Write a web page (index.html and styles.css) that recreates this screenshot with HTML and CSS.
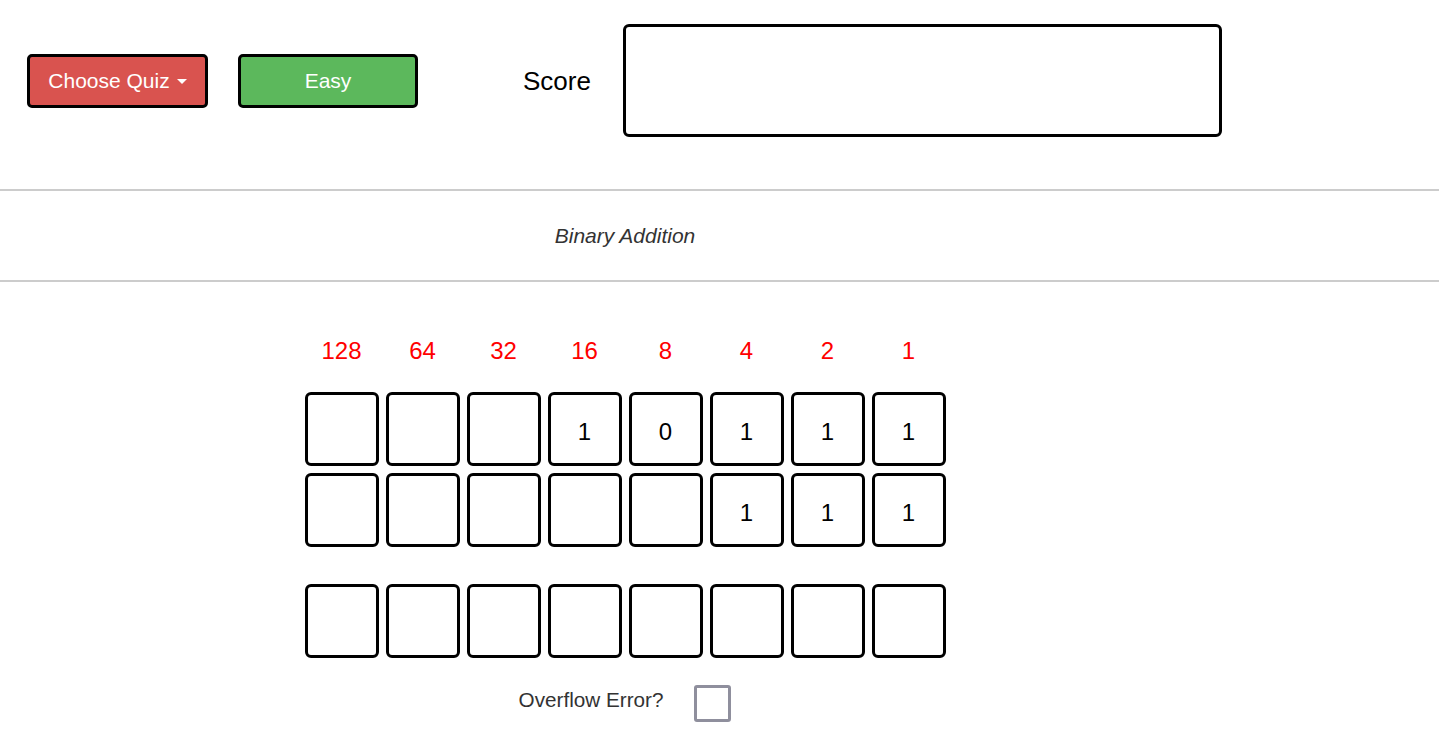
FILE: index.html
```html
<!DOCTYPE html>
<html lang="en">
<head>
<meta charset="utf-8">
<title>Binary Addition Quiz</title>
<link rel="stylesheet" href="styles.css">
</head>
<body>
  <header class="topbar">
    <button class="btn btn-red" type="button">Choose Quiz <span class="caret"></span></button>
    <button class="btn btn-green" type="button">Easy</button>
    <span class="score-label">Score</span>
    <div class="score-box"></div>
  </header>
  <hr class="rule">
  <section class="title-bar">
    <div class="main">
      <p class="quiz-title">Binary Addition</p>
    </div>
  </section>
  <hr class="rule">
  <section class="main">
    <div class="board">
      <div class="grid labels">
        <span>128</span><span>64</span><span>32</span><span>16</span><span>8</span><span>4</span><span>2</span><span>1</span>
      </div>
      <div class="grid cells">
        <div class="cell"></div><div class="cell"></div><div class="cell"></div><div class="cell">1</div><div class="cell">0</div><div class="cell">1</div><div class="cell">1</div><div class="cell">1</div>
        <div class="cell"></div><div class="cell"></div><div class="cell"></div><div class="cell"></div><div class="cell"></div><div class="cell">1</div><div class="cell">1</div><div class="cell">1</div>
      </div>
      <div class="grid cells answer">
        <div class="cell"></div><div class="cell"></div><div class="cell"></div><div class="cell"></div><div class="cell"></div><div class="cell"></div><div class="cell"></div><div class="cell"></div>
      </div>
      <label class="overflow">
        <span class="overflow-text">Overflow Error?</span>
        <span class="checkbox"></span>
      </label>
    </div>
  </section>
</body>
</html>
```

FILE: styles.css
```css
html, body {
  margin: 0;
  padding: 0;
  background: #fff;
  font-family: "Liberation Sans", Arial, Helvetica, sans-serif;
  color: #000;
}

.topbar {
  display: flex;
  align-items: center;
  padding: 24px 0 52px 27px;
}

.btn {
  font-family: inherit;
  width: 181px;
  height: 54px;
  border: 3px solid #000;
  border-radius: 5px;
  color: #fff;
  font-size: 21px;
  display: flex;
  align-items: center;
  justify-content: center;
  gap: 7px;
  padding: 0;
  margin-top: 1px;
}

.btn-red {
  background: #d9534f;
}

.btn-green {
  background: #5cb85c;
  margin-left: 30px;
  width: 180px;
}

.caret {
  display: inline-block;
  width: 0;
  height: 0;
  border-top: 5px solid #fff;
  border-left: 5px solid transparent;
  border-right: 5px solid transparent;
  margin-top: 1px;
}

.score-label {
  font-size: 26px;
  margin-left: 105px;
  margin-top: 1px;
}

.score-box {
  width: 599px;
  height: 113px;
  box-sizing: border-box;
  border: 3px solid #000;
  border-radius: 6px;
  margin-left: 32px;
}

.rule {
  margin: 0;
  border: 0;
  height: 2px;
  background: #ccc;
}

.title-bar {
  height: 89px;
}

.main {
  width: 1250px;
  height: 100%;
  display: flex;
  flex-direction: column;
  align-items: center;
  justify-content: center;
}

.quiz-title {
  margin: 0;
  font-size: 21px;
  font-style: italic;
  color: #333;
  line-height: 24px;
  padding-top: 1px;
}

.board {
  width: 641px;
  padding-top: 54px;
  display: flex;
  flex-direction: column;
}

.grid {
  display: grid;
  grid-template-columns: repeat(8, 74px);
  column-gap: 7px;
  row-gap: 7px;
}

.labels {
  color: #f00;
  font-size: 24px;
  line-height: 30px;
  text-align: center;
  margin-bottom: 26px;
}

.cell {
  box-sizing: border-box;
  width: 74px;
  height: 74px;
  border: 3px solid #000;
  border-radius: 6px;
  font-size: 24px;
  display: flex;
  align-items: center;
  justify-content: center;
  padding-top: 5px;
}

.answer {
  margin-top: 37px;
}

.overflow {
  display: flex;
  align-items: center;
  justify-content: center;
  gap: 31px;
  margin-top: 27px;
  font-size: 20.7px;
  color: #333;
}

.overflow-text {
  margin-top: -7px;
}

.checkbox {
  display: block;
  box-sizing: border-box;
  width: 37px;
  height: 37px;
  border: 3px solid #8f8f9d;
  border-radius: 3px;
  background: #fff;
}
```
